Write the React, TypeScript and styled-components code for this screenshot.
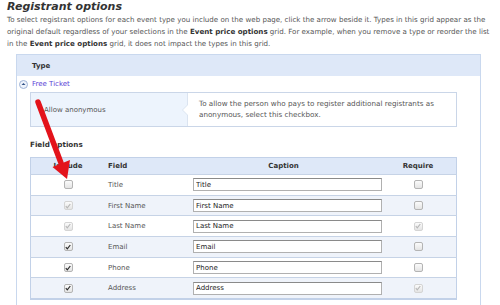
import React from "react";
import styled, { createGlobalStyle } from "styled-components";

const GlobalStyle = createGlobalStyle`
    body {
        margin: 0;
        background: #ffffff;
        font-family: "DejaVu Sans", Verdana, sans-serif;
    }
`;

const Page = styled.div`
    position: relative;
    width: 500px;
    height: 305px;
    overflow: hidden;
    padding: 0 0 0 7px;
    box-sizing: border-box;
`;

const Title = styled.h1`
    margin: 0;
    font-size: 11px;
    line-height: 14px;
    font-weight: bold;
    font-style: italic;
    color: #333;
`;

const Intro = styled.p`
    margin: 0;
    font-size: 7.1px;
    line-height: 12px;
    color: #555;
    white-space: nowrap;
    b {
        color: #333;
    }
`;

const Panel = styled.section`
    margin: 4px 19px 0 9px;
    border-left: 1px solid #c9d8ee;
    border-right: 1px solid #c9d8ee;
    min-height: 260px;
`;

const PanelHead = styled.div`
    height: 21px;
    display: flex;
    align-items: center;
    padding-left: 15px;
    background: #dee8f8;
    border-top: 1px solid #c9d8ee;
    font-size: 7px;
    font-weight: bold;
    color: #333;
`;

const TypeRow = styled.div`
    height: 16px;
    display: flex;
    align-items: center;
    gap: 4px;
    padding-left: 2px;
    font-size: 7px;
    color: #5a42d6;
`;

const Toggle = styled.span`
    width: 7px;
    height: 7px;
    border-radius: 50%;
    border: 1px solid #9fb3d6;
    background: #eef3fb;
    display: flex;
    align-items: center;
    justify-content: center;
`;

const Body = styled.div`
    padding: 0 23px 0 13px;
`;

const OptionBox = styled.div`
    display: flex;
    height: 35px;
    box-sizing: border-box;
    border: 1px solid #cad6e8;
`;

const OptionLabel = styled.div`
    position: relative;
    width: 157px;
    background: #edf4fd;
    display: flex;
    align-items: center;
    padding-left: 13px;
    box-sizing: border-box;
    font-size: 7px;
    color: #555;
    border-right: 1px solid #dbe4f0;
    &::after {
        content: "";
        position: absolute;
        right: -1px;
        top: 11px;
        border-top: 6px solid transparent;
        border-bottom: 6px solid transparent;
        border-right: 6px solid #dbe4f0;
    }
    &::before {
        content: "";
        position: absolute;
        right: -1px;
        top: 12px;
        border-top: 5px solid transparent;
        border-bottom: 5px solid transparent;
        border-right: 5px solid #ffffff;
        z-index: 1;
    }
`;

const OptionHelp = styled.div`
    flex: 1;
    padding: 5px 0 0 11px;
    font-size: 7.2px;
    line-height: 11px;
    color: #555;
    white-space: nowrap;
`;

const SectionLabel = styled.div`
    height: 30px;
    display: flex;
    align-items: center;
    padding-top: 4px;
    box-sizing: border-box;
    font-size: 7.2px;
    font-weight: bold;
    color: #333;
`;

const Grid = styled.table`
    width: 427px;
    border-collapse: collapse;
    border: 1px solid #c2d1e8;
    border-bottom-width: 2px;
    font-size: 7px;
    color: #555;
    table-layout: fixed;
`;

const HeadCell = styled.th<{ $align?: string; $w?: number }>`
    height: 16px;
    padding: 0 0 0 ${(p) => (p.$align === "left" ? "3px" : "0")};
    width: ${(p) => (p.$w ? `${p.$w}px` : "auto")};
    background: #dee8f8;
    text-align: ${(p) => p.$align || "center"};
    font-weight: bold;
    color: #333;
`;

const Row = styled.tr<{ $shade: boolean }>`
    height: 20.7px;
    background: ${(p) => (p.$shade ? "#eff3fa" : "#ffffff")};
    border-top: 1px solid #c6d3e6;
`;

const Cell = styled.td<{ $align?: string }>`
    padding: 0 0 0 ${(p) => (p.$align === "left" ? "3px" : "0")};
    text-align: ${(p) => p.$align || "center"};
    vertical-align: middle;
`;

const Box = styled.span<{ $disabled: boolean }>`
    display: inline-flex;
    align-items: center;
    justify-content: center;
    width: 7px;
    height: 7px;
    border: 1px solid ${(p) => (p.$disabled ? "#d4d4d4" : "#b4b4b4")};
    border-radius: 2px;
    background: linear-gradient(#fbfbfb, #e4e4e4);
    vertical-align: middle;
`;

const CaptionInput = styled.input`
    box-sizing: border-box;
    width: 189px;
    height: 13px;
    margin-left: 3px;
    padding: 0 2px;
    border: 1px solid #b0b0b0;
    border-top-color: #8a8a8a;
    font-family: "DejaVu Sans", Verdana, sans-serif;
    font-size: 7px;
    color: #222;
    display: block;
`;

const Arrow = styled.svg`
    position: absolute;
    left: 0;
    top: 0;
    pointer-events: none;
`;

function Check({ checked, disabled }: { checked: boolean; disabled?: boolean }) {
    return (
        <Box $disabled={!!disabled}>
            {checked && (
                <svg width="6" height="6" viewBox="0 0 6 6">
                    <path
                        d="M0.8 3.2 L2.3 4.8 L5.3 1"
                        fill="none"
                        stroke={disabled ? "#b8b8b8" : "#2b2b2b"}
                        strokeWidth="1.2"
                    />
                </svg>
            )}
        </Box>
    );
}

const fields = [
    { name: "Title", include: false, incOff: false, req: false, reqOff: false },
    { name: "First Name", include: true, incOff: true, req: false, reqOff: false },
    { name: "Last Name", include: true, incOff: true, req: true, reqOff: true },
    { name: "Email", include: true, incOff: false, req: false, reqOff: false },
    { name: "Phone", include: true, incOff: false, req: false, reqOff: false },
    { name: "Address", include: true, incOff: false, req: true, reqOff: true },
];

function App() {
    return (
        <Page>
            <GlobalStyle />
            <Title>Registrant options</Title>
            <Intro>
                To select registrant options for each event type you include on the web page, click the arrow beside it. Types in this grid appear as the
                <br />
                original default regardless of your selections in the <b>Event price options</b> grid. For example, when you remove a type or reorder the list
                <br />
                in the <b>Event price options</b> grid, it does not impact the types in this grid.
            </Intro>
            <Panel>
                <PanelHead>Type</PanelHead>
                <TypeRow>
                    <Toggle>
                        <svg width="5" height="4" viewBox="0 0 5 4">
                            <path d="M0.5 3 L2.5 1 L4.5 3 Z" fill="#2f4f86" />
                        </svg>
                    </Toggle>
                    Free Ticket
                </TypeRow>
                <Body>
                    <OptionBox>
                        <OptionLabel>Allow anonymous</OptionLabel>
                        <OptionHelp>
                            To allow the person who pays to register additional registrants as
                            <br />
                            anonymous, select this checkbox.
                        </OptionHelp>
                    </OptionBox>
                    <SectionLabel>Field options</SectionLabel>
                    <Grid>
                        <thead>
                            <tr>
                                <HeadCell $w={74}>Include</HeadCell>
                                <HeadCell $align="left" $w={79}>Field</HeadCell>
                                <HeadCell>Caption</HeadCell>
                                <HeadCell $w={76}>Require</HeadCell>
                            </tr>
                        </thead>
                        <tbody>
                            {fields.map((f, i) => (
                                <Row key={f.name} $shade={i % 2 === 1}>
                                    <Cell>
                                        <Check checked={f.include} disabled={f.incOff} />
                                    </Cell>
                                    <Cell $align="left">{f.name}</Cell>
                                    <Cell $align="left">
                                        <CaptionInput defaultValue={f.name} />
                                    </Cell>
                                    <Cell>
                                        <Check checked={f.req} disabled={f.reqOff} />
                                    </Cell>
                                </Row>
                            ))}
                        </tbody>
                    </Grid>
                </Body>
            </Panel>
            <Arrow width="500" height="305">
                <line x1="38" y1="102" x2="61" y2="163" stroke="#e3131b" strokeWidth="5.5" strokeLinecap="round" />
                <polygon points="67,179 70,160 52.5,167" fill="#e3131b" />
            </Arrow>
        </Page>
    );
}

export default App;
